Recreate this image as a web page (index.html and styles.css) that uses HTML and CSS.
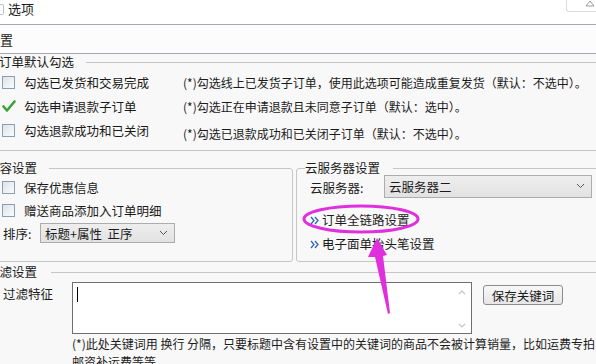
FILE: index.html
```html
<!DOCTYPE html>
<html lang="zh-CN">
<head>
<meta charset="UTF-8">
<meta name="viewport" content="width=device-width, initial-scale=1.0">
<title>选项</title>
<link rel="stylesheet" href="styles.css">
</head>
<body>
<div class="window">
    <div class="titlebar">
        <span class="app-icon"></span>
        <span class="title">选项</span>
        <span class="ribbon-btn">
            <svg width="10" height="7" viewBox="0 0 10 7"><path d="M1 6 L5 1 L9 6 Z" fill="none" stroke="#9a9ea6" stroke-width="1"/></svg>
        </span>
    </div>
    <div class="tabbar"><span class="tab">设置</span></div>

    <div class="content">
        <fieldset class="group group-orders">
            <legend>订单默认勾选</legend>
            <div class="order-row">
                <label class="check"><span class="box"></span>勾选已发货和交易完成</label>
                <span class="note">(*)勾选线上已发货子订单，使用此选项可能造成重复发货（默认：不选中）。</span>
            </div>
            <div class="order-row">
                <label class="check">
                    <svg class="tick" width="14" height="13" viewBox="0 0 14 13"><path d="M1.5 6.5 L5 10.5 L12.5 1.5" fill="none" stroke="#3aa335" stroke-width="2.6" stroke-linecap="round" stroke-linejoin="round"/></svg>勾选申请退款子订单</label>
                <span class="note">(*)勾选正在申请退款且未同意子订单（默认：选中）。</span>
            </div>
            <div class="order-row">
                <label class="check"><span class="box"></span>勾选退款成功和已关闭</label>
                <span class="note note-low">(*)勾选已退款成功和已关闭子订单（默认：不选中）。</span>
            </div>
        </fieldset>

        <div class="split">
            <fieldset class="group group-content">
                <legend>内容设置</legend>
                <div class="opt-row first"><label class="check"><span class="box"></span>保存优惠信息</label></div>
                <div class="opt-row"><label class="check"><span class="box"></span>赠送商品添加入订单明细</label></div>
                <div class="opt-row sort-row">
                    <span class="sort-label">排序:</span>
                    <div class="combo combo-sort">
                        <span>标题+属性&nbsp;&nbsp;正序</span>
                        <svg width="9" height="6" viewBox="0 0 9 6"><path d="M1 1 L4.5 4.5 L8 1" fill="none" stroke="#555" stroke-width="1"/></svg>
                    </div>
                </div>
            </fieldset>

            <fieldset class="group group-cloud">
                <legend>云服务器设置</legend>
                <div class="cloud-row">
                    <span class="cloud-label">云服务器:</span>
                    <div class="combo combo-cloud">
                        <span>云服务器二</span>
                        <svg width="9" height="6" viewBox="0 0 9 6"><path d="M1 1 L4.5 4.5 L8 1" fill="none" stroke="#555" stroke-width="1"/></svg>
                    </div>
                </div>
                <a class="link link-first"><svg class="dbl" width="9" height="9" viewBox="0 0 9 9"><path d="M1 1 L4 4.5 L1 8 M5 1 L8 4.5 L5 8" fill="none" stroke="#2f64b5" stroke-width="1.3"/></svg>订单全链路设置</a>
                <a class="link"><svg class="dbl" width="9" height="9" viewBox="0 0 9 9"><path d="M1 1 L4 4.5 L1 8 M5 1 L8 4.5 L5 8" fill="none" stroke="#2f64b5" stroke-width="1.3"/></svg>电子面单抬头笔设置</a>
            </fieldset>
        </div>

        <fieldset class="group group-filter">
            <legend>过滤设置</legend>
            <div class="filter-row">
                <span class="filter-label">过滤特征</span>
                <div class="textarea">
                    <span class="caret"></span>
                    <span class="scroll">
                        <svg width="8" height="5" viewBox="0 0 8 5"><path d="M1 4 L4 1 L7 4" fill="none" stroke="#c4c4c4" stroke-width="1.2"/></svg>
                        <svg width="8" height="5" viewBox="0 0 8 5"><path d="M1 1 L4 4 L7 1" fill="none" stroke="#c4c4c4" stroke-width="1.2"/></svg>
                    </span>
                </div>
                <button class="btn" type="button">保存关键词</button>
            </div>
            <p class="filter-note">(*)此处关键词用 换行 分隔，只要标题中含有设置中的关键词的商品不会被计算销量，比如运费专拍<br>邮资补运费等等</p>
        </fieldset>
    </div>

    <!-- annotation drawn over the dialog -->
    <svg class="mark" width="596" height="364" viewBox="0 0 596 364">
        <ellipse cx="361" cy="219" rx="57" ry="13" fill="none" stroke="#e02fdc" stroke-width="3"/>
        <polygon points="377,238 387,255 383,256 390,313 388,314 375,257 368,257" fill="#e02fdc"/>
    </svg>
</div>
</body>
</html>
```

FILE: styles.css
```css
body {
    margin: 0;
    padding: 0;
    overflow: hidden;
    background-color: #f8f8f8;
    font-family: "Noto Sans CJK SC", "Liberation Sans", sans-serif;
    font-size: 12.5px;
    color: #1b1b1b;
}
.window {
    position: relative;
    width: 596px;
    height: 364px;
    overflow: hidden;
}
.titlebar {
    display: flex;
    align-items: flex-start;
    height: 24px;
    background-color: #fff;
    border-bottom: 1px solid #a6a9b0;
}
.app-icon {
    width: 3px;
    height: 9px;
    margin-top: 4px;
    border: 1px solid #b9c3cf;
    border-left: none;
    border-radius: 0 2px 2px 0;
}
.title {
    margin-left: 4px;
    line-height: 17px;
    font-size: 13px;
}
.ribbon-btn {
    display: flex;
    justify-content: flex-end;
    align-items: flex-start;
    margin-left: auto;
    width: 28px;
    height: 11px;
    padding-right: 1px;
    border: 1px solid #dcdde0;
    border-top: none;
    border-right: none;
    border-radius: 0 0 0 3px;
    background-color: #fff;
}
.tabbar {
    display: flex;
    align-items: center;
    height: 28px;
    background-color: #fcfcfc;
    border-bottom: 1px solid #a6a9b0;
}
.tab {
    margin-left: -13px;
    font-size: 13px;
}

.group {
    box-sizing: border-box;
    margin: 0;
    padding: 0;
    min-width: 0;
    border: 1px solid #c6c6c6;
    border-radius: 3px;
}
.group legend {
    padding: 0 12px 0 0;
    line-height: 16px;
}

.group-orders {
    margin-left: -12px;
    margin-right: -12px;
    padding: 0 0 8px 13px;
}
.group-orders legend {
    margin-left: -3px;
    padding-right: 12px;
}
.order-row {
    display: flex;
    align-items: center;
    height: 24px;
}
.check {
    display: flex;
    align-items: center;
    width: 181px;
    flex-shrink: 0;
}
.box {
    width: 13px;
    height: 13px;
    margin-right: 9px;
    box-sizing: border-box;
    border: 1px solid #8d9db3;
    background: linear-gradient(135deg, #dde3ea, #fbfcfd);
}
.tick {
    margin-right: 8px;
}
.note {
    font-size: 12px;
    white-space: nowrap;
}
.note-low {
    margin-top: 7px;
}

.split {
    display: flex;
    gap: 3px;
    margin-top: 9px;
}
.group-content {
    width: 309px;
    flex-shrink: 0;
    margin-left: -16px;
    padding: 0 0 17px 17px;
}
.group-content legend {
    margin-left: -15px;
}
.opt-row {
    display: flex;
    align-items: center;
    height: 24px;
}
.opt-row.first {
    height: 22px;
}
.sort-row {
    height: 22px;
}
.sort-label {
    width: 38px;
    padding-left: 1px;
    box-sizing: border-box;
}
.combo {
    display: flex;
    align-items: center;
    justify-content: space-between;
    box-sizing: border-box;
    padding: 0 6px 0 4px;
    border: 1px solid #acacac;
    background: linear-gradient(#eeeeee, #e2e2e2);
}
.combo-sort {
    width: 135px;
    height: 20px;
}

.group-cloud {
    flex: 1;
    margin-right: -20px;
    padding: 0 0 0 13px;
}
.group-cloud legend {
    margin-left: -5px;
    padding-right: 13px;
}
.cloud-row {
    display: flex;
    align-items: center;
    height: 22px;
}
.cloud-label {
    width: 74px;
}
.combo-cloud {
    width: 208px;
    height: 23px;
    margin-top: -2px;
}
.link {
    display: flex;
    align-items: center;
    line-height: 24px;
    color: #1b1b1b;
}
.link-first {
    margin-top: 10px;
}
.dbl {
    margin-right: 3px;
}

.group-filter {
    margin: 2px -20px 0 -16px;
    padding: 0 0 0 18px;
}
.group-filter legend {
    margin-left: -16px;
    padding-right: 14px;
}
.filter-row {
    display: flex;
    align-items: flex-start;
    margin-top: 2px;
}
.filter-label {
    width: 69px;
    line-height: 24px;
}
.textarea {
    display: flex;
    justify-content: space-between;
    box-sizing: border-box;
    width: 400px;
    height: 52px;
    padding: 4px 3px 4px 4px;
    border: 1px solid #6e6e6e;
    background-color: #fff;
}
.caret {
    width: 1px;
    height: 15px;
    background-color: #000;
}
.scroll {
    display: flex;
    flex-direction: column;
    justify-content: space-between;
    padding: 3px 0 1px;
    width: 12px;
    align-items: center;
}
.btn {
    width: 80px;
    height: 20px;
    margin: 3px 0 0 11px;
    padding: 0;
    border: 1px solid #8c8c8c;
    border-radius: 3px;
    background: linear-gradient(#f8f8f8, #e6e6e6);
    font-family: inherit;
    font-size: 12.5px;
    color: #1b1b1b;
}
.filter-note {
    margin: 1px 0 0 69px;
    line-height: 18px;
    font-size: 12px;
    white-space: nowrap;
}

.mark {
    position: absolute;
    top: 0;
    left: 0;
    pointer-events: none;
}
```
